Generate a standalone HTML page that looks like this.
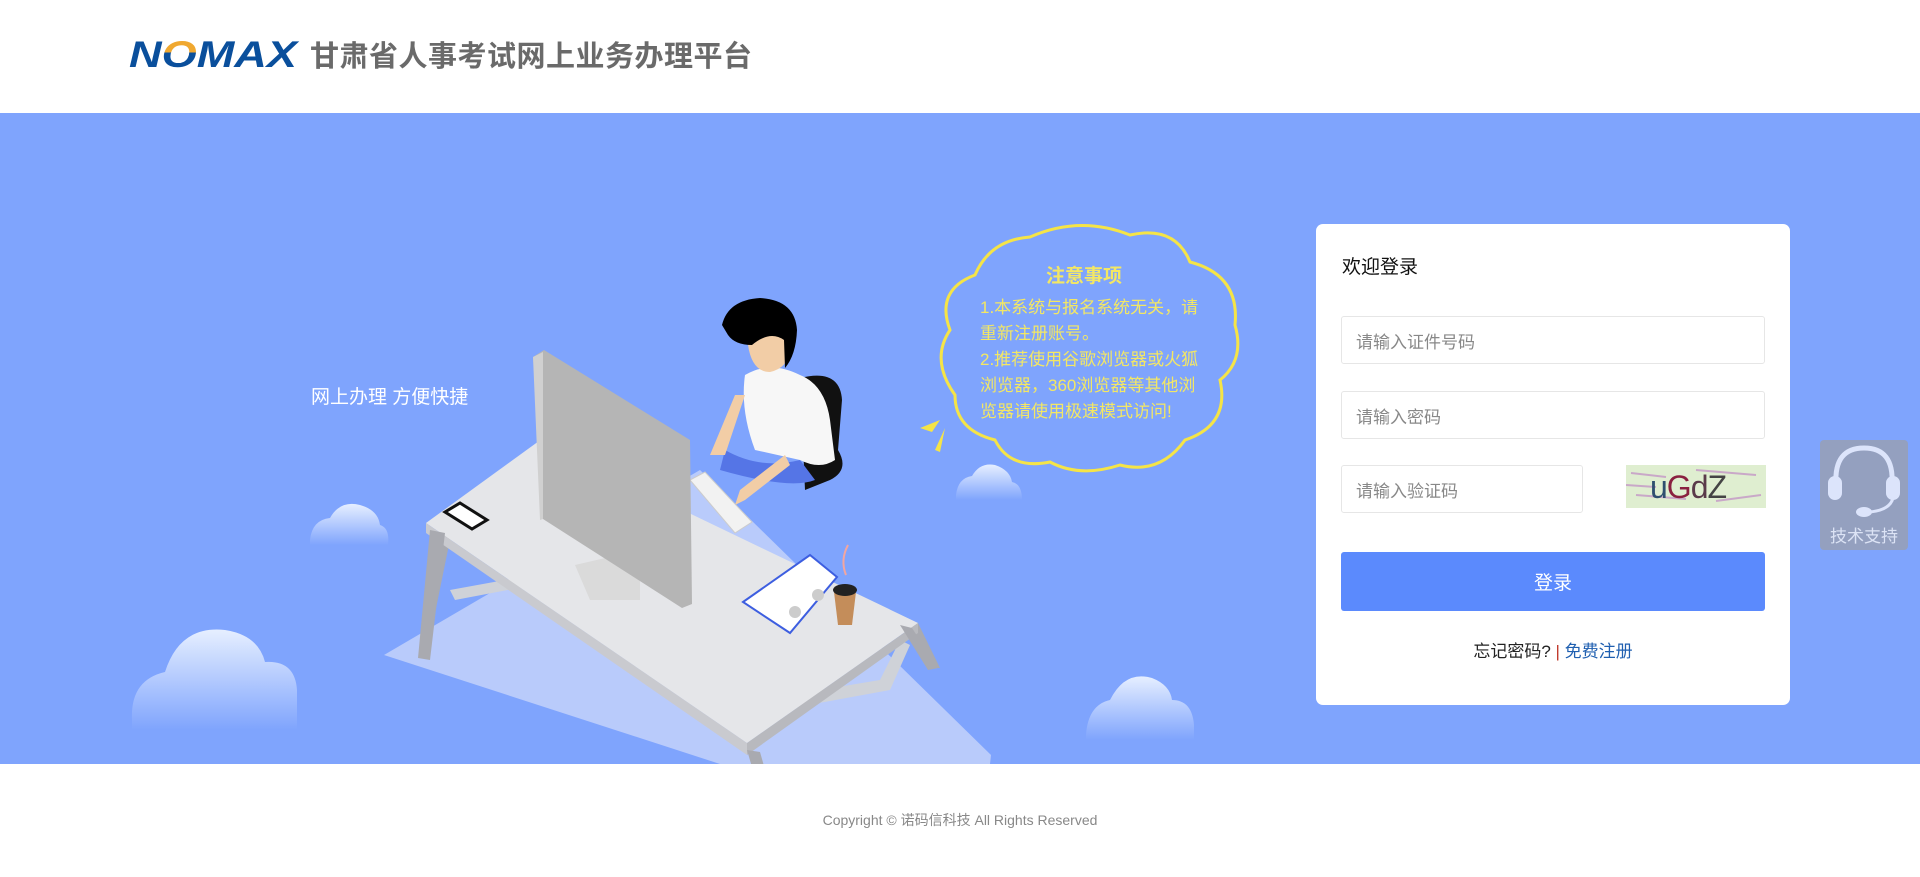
<!DOCTYPE html>
<html><head><meta charset="utf-8"><style>
*{margin:0;padding:0;box-sizing:border-box}
body{width:1920px;height:877px;position:relative;background:#fff;font-family:"Liberation Sans","Noto Sans CJK SC",sans-serif;overflow:hidden}
.abs{position:absolute}
.band{left:0;top:113px;width:1920px;height:651px;background:#7fa4fd}
.title{left:310px;top:33px;font-size:29px;color:#6a6a6a;font-weight:bold;letter-spacing:0.5px;white-space:nowrap}
.card{left:1316px;top:224px;width:474px;height:481px;background:#fff;border-radius:7px}
.inp{position:absolute;border:1px solid #e6e6e6;border-radius:3px;background:#fff;color:#888;font-size:17px;padding-left:14px;display:flex;align-items:center}
.btn{position:absolute;left:25px;top:328px;width:424px;height:59px;background:#5b8afd;border-radius:3px;color:#fff;font-size:19px;display:flex;align-items:center;justify-content:center}
.links{position:absolute;left:0;top:413px;width:474px;text-align:center;font-size:17px;color:#222}
.foot{left:0;top:810px;width:1920px;text-align:center;font-size:14px;color:#888}
.sup{left:1820px;top:440px;width:88px;height:110px;background:#94a0bf;border-radius:4px}
.tip{font-size:17px;color:#f3e764;line-height:26px;white-space:nowrap}
</style></head><body>
<svg class="abs" style="left:124px;top:36px" width="180" height="36" viewBox="0 0 180 36">
<defs><linearGradient id="og" x1="0" y1="0" x2="0" y2="1"><stop offset="0.45" stop-color="#f0a830"/><stop offset="0.45" stop-color="#0a4f9c"/></linearGradient></defs>
<text x="5" y="31" font-family="Liberation Sans" font-weight="bold" font-style="italic" font-size="37" fill="#0a4f9c" textLength="168" lengthAdjust="spacingAndGlyphs"><tspan>N</tspan><tspan fill="url(#og)">O</tspan><tspan>MAX</tspan></text>
</svg>
<div class="abs title">甘肃省人事考试网上业务办理平台</div>
<div class="abs band"></div>
<svg class="abs" style="left:0;top:113px" width="1920" height="651" viewBox="0 113 1920 651">
<defs>
<linearGradient id="cl" x1="0" y1="0" x2="0" y2="1"><stop offset="0" stop-color="#e6efff"/><stop offset="1" stop-color="#e6efff" stop-opacity="0"/></linearGradient>
</defs>
<g fill="url(#cl)">
<path d="M132 720 Q130 680 165 672 Q180 625 225 630 Q258 635 265 662 Q295 660 297 690 L297 730 L132 730Z"/>
<path d="M310 540 Q312 520 330 518 Q340 500 360 505 Q378 510 380 525 Q390 528 388 545 L310 545Z"/>
<path d="M1086 735 Q1088 705 1110 700 Q1125 670 1152 678 Q1170 685 1172 700 Q1192 700 1194 725 L1194 740 L1086 740Z"/>
<path d="M956 495 Q958 478 972 476 Q980 462 995 465 Q1010 470 1012 482 Q1022 484 1022 500 L956 500Z"/>
</g>
<polygon points="384,655 700,470 991,755 990,764 720,764" fill="#b9cbfb"/>
<polygon points="440,530 452,530 432,628 422,624" fill="#a9aab0"/>
<polygon points="905,620 918,623 940,668 928,668" fill="#a9aab0"/>
<polygon points="760,700 880,680 900,640 910,645 890,690 770,712" fill="#cfd2d8"/>
<polygon points="450,590 560,570 560,580 455,600" fill="#cfd2d8"/>
<polygon points="426,523 539,441 918,623 747,743" fill="#e5e6e9"/>
<polygon points="426,523 747,743 747,755 426,533" fill="#c9cacf"/>
<polygon points="747,743 918,623 918,633 747,755" fill="#b8b9be"/>
<polygon points="747,750 760,752 788,850 776,850" fill="#a9aab0"/>
<polygon points="900,625 912,628 938,668 928,670" fill="#a9aab0"/>
<polygon points="430,530 445,533 430,660 418,658" fill="#a9aab0"/>
<polygon points="445,512 460,503 487,520 472,529" fill="#fff" stroke="#111" stroke-width="3"/>
<path d="M800 378 Q840 368 842 400 L838 450 Q850 470 830 480 L805 490 Z" fill="#111"/>
<path d="M725 450 Q760 470 800 460 L815 480 Q790 490 720 470 Z" fill="#5575e6"/>
<path d="M745 375 Q770 360 800 375 Q825 385 830 420 L835 460 Q820 470 800 460 L755 450 Q740 410 745 375Z" fill="#f7f7f7"/>
<path d="M745 395 L725 455 L710 455 L735 395Z" fill="#f2cda6"/>
<path d="M790 465 L745 500 L735 505 L740 490 L785 455Z" fill="#f2cda6"/>
<path d="M748 345 Q746 320 770 320 Q790 322 790 350 Q788 368 770 372 Q752 372 748 345Z" fill="#f2cda6"/>
<path d="M722 325 Q728 300 760 298 Q795 300 797 330 Q796 355 785 368 L784 340 Q770 330 752 345 Q735 345 728 335Z" fill="#000"/>
<polygon points="690,480 705,472 752,522 735,533" fill="#f2f2f2" stroke="#ccc"/>
<polygon points="575,565 640,550 640,600 590,600" fill="#dadada"/>
<polygon points="533,357 544,350 690,440 692,604 682,608 543,519" fill="#b5b5b5"/>
<polygon points="533,357 543,352 543,519 540,520" fill="#d0d0d0"/>
<polygon points="743,602 810,555 837,577 790,633" fill="#fff" stroke="#3d5ee0" stroke-width="2"/>
<circle cx="795" cy="612" r="6" fill="#ccc"/><circle cx="818" cy="595" r="6" fill="#ccc"/>
<path d="M834 592 L856 592 L852 625 L838 625Z" fill="#c48d5a"/>
<ellipse cx="845" cy="590" rx="12" ry="6" fill="#222"/>
<path d="M846 575 Q840 560 848 545" stroke="#f3a6a0" stroke-width="2" fill="none"/>
<path d="M1030 237 Q1080 215 1130 235 Q1175 225 1190 262 Q1240 275 1235 325 Q1245 360 1220 380 Q1230 425 1185 440 Q1160 475 1120 465 Q1080 478 1050 462 Q1010 470 995 440 Q955 430 955 395 Q930 360 950 330 Q935 290 975 275 Q990 240 1030 237Z" fill="none" stroke="#f5e447" stroke-width="3"/>
<polygon points="920,428 940,420 932,432" fill="#f5e447"/>
<polygon points="935,450 945,428 940,452" fill="#f5e447"/>
</svg>
<div class="abs" style="left:311px;top:382px;font-size:19px;color:#fff;white-space:nowrap">网上办理 方便快捷</div>
<div class="abs" style="left:1046px;top:261px;font-size:19px;font-weight:bold;color:#f3e764">注意事项</div>
<div class="abs tip" style="left:980px;top:295px">1.本系统与报名系统无关，请<br>重新注册账号。<br>2.推荐使用谷歌浏览器或火狐<br>浏览器，360浏览器等其他浏<br>览器请使用极速模式访问!</div>
<div class="abs card">
<div style="position:absolute;left:26px;top:28px;font-size:19px;color:#111">欢迎登录</div>
<div class="inp" style="left:25px;top:92px;width:424px;height:48px">请输入证件号码</div>
<div class="inp" style="left:25px;top:167px;width:424px;height:48px">请输入密码</div>
<div class="inp" style="left:25px;top:241px;width:242px;height:48px">请输入验证码</div>
<div style="position:absolute;left:310px;top:241px;width:140px;height:43px;background:#dfeed0;overflow:hidden">
<svg width="140" height="43"><g stroke="#c9a8c8" stroke-width="2"><line x1="5" y1="8" x2="40" y2="12"/><line x1="10" y1="30" x2="60" y2="34"/><line x1="70" y1="5" x2="130" y2="10"/><line x1="90" y1="36" x2="135" y2="30"/><line x1="0" y1="20" x2="30" y2="22"/></g>
<text x="24" y="33" font-family="Liberation Sans" font-size="32" fill="#5a3a4a" letter-spacing="-1"><tspan fill="#2f4f6f">u</tspan><tspan fill="#8a2040">G</tspan><tspan>d</tspan><tspan fill="#444">Z</tspan></text></svg></div>
<div class="btn">登录</div>
<div class="links">忘记密码? <span style="color:#c0392b">|</span> <span style="color:#1f5fb0">免费注册</span></div>
</div>
<div class="abs sup">
<svg width="88" height="80" viewBox="0 0 88 80"><path d="M16 44 Q14 8 44 8 Q74 8 72 44" fill="none" stroke="#dce4fb" stroke-width="5"/><rect x="8" y="36" width="14" height="24" rx="7" fill="#dce4fb"/><rect x="66" y="36" width="14" height="24" rx="7" fill="#dce4fb"/><path d="M73 58 Q70 70 50 72" fill="none" stroke="#dce4fb" stroke-width="3"/><ellipse cx="44" cy="72" rx="8" ry="5" fill="#dce4fb"/></svg>
<div style="position:absolute;left:0;top:82px;width:88px;text-align:center;font-size:17px;color:#dce3f5">技术支持</div>
</div>
<div class="abs foot">Copyright © 诺码信科技 All Rights Reserved</div>
</body></html>
